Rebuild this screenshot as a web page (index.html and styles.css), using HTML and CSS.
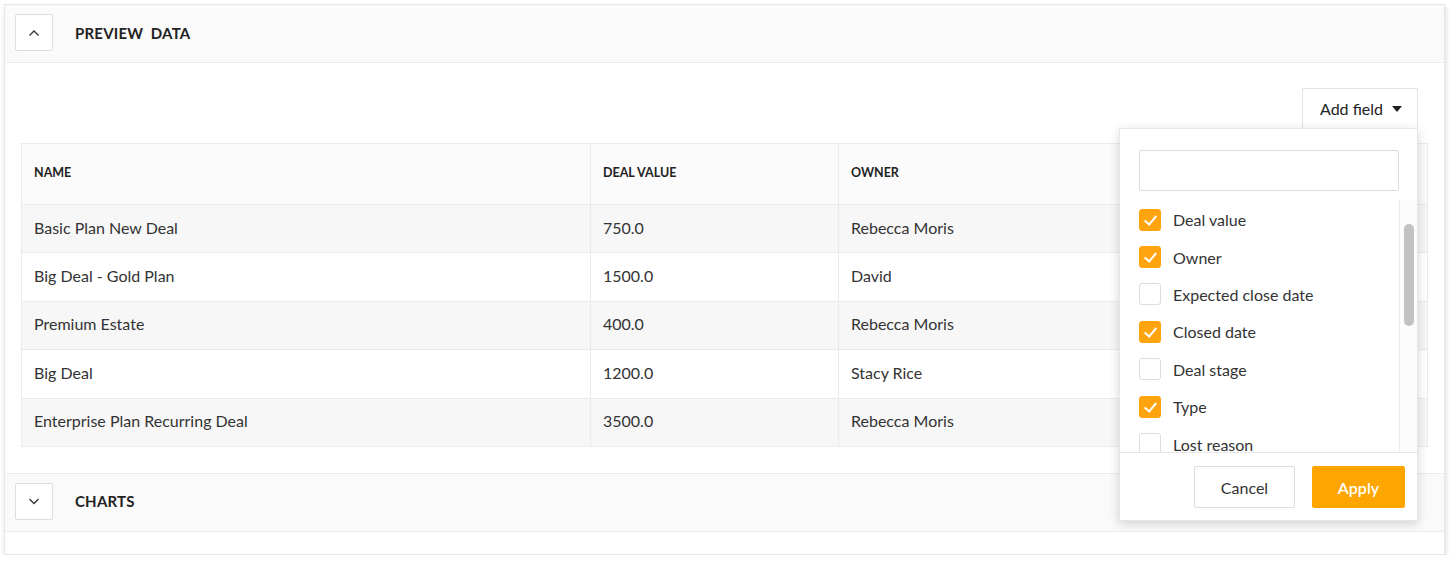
FILE: index.html
```html
<!DOCTYPE html>
<html lang="en">
<head>
  <meta charset="UTF-8">
  <meta name="viewport" content="width=device-width, initial-scale=1.0">
  <title>Report - Preview data</title>
  <link rel="stylesheet" href="styles.css">
</head>
<body>
  <div class="card">

    <!-- Preview data -->
    <section class="panel">
      <div class="panel-head">
        <button class="toggle">
          <svg width="14" height="14" viewBox="0 0 14 14"><path d="M2.5 9.5 L7 5 L11.5 9.5" fill="none" stroke="#333" stroke-width="1.3"/></svg>
        </button>
        <h2>PREVIEW&nbsp; DATA</h2>
      </div>

      <div class="panel-body">
        <div class="toolbar">
          <div class="field-picker">
            <button class="add-field">Add field <span class="caret"></span></button>

            <div class="dropdown">
              <input type="text" class="dropdown-search">
              <div class="dropdown-list">
                <ul class="options">
                  <li><span class="check on"></span>Deal value</li>
                  <li><span class="check on"></span>Owner</li>
                  <li><span class="check"></span>Expected close date</li>
                  <li><span class="check on"></span>Closed date</li>
                  <li><span class="check"></span>Deal stage</li>
                  <li><span class="check on"></span>Type</li>
                  <li><span class="check"></span>Lost reason</li>
                </ul>
                <div class="scroll-track"><div class="scroll-thumb"></div></div>
              </div>
              <div class="dropdown-foot">
                <button class="btn">Cancel</button>
                <button class="btn primary">Apply</button>
              </div>
            </div>
          </div>
        </div>

        <table class="data">
          <thead>
            <tr><th>NAME</th><th>DEAL VALUE</th><th>OWNER</th></tr>
          </thead>
          <tbody>
            <tr><td>Basic Plan New Deal</td><td>750.0</td><td>Rebecca Moris</td></tr>
            <tr><td>Big Deal - Gold Plan</td><td>1500.0</td><td>David</td></tr>
            <tr><td>Premium Estate</td><td>400.0</td><td>Rebecca Moris</td></tr>
            <tr><td>Big Deal</td><td>1200.0</td><td>Stacy Rice</td></tr>
            <tr><td>Enterprise Plan Recurring Deal</td><td>3500.0</td><td>Rebecca Moris</td></tr>
          </tbody>
        </table>
      </div>
    </section>

    <!-- Charts -->
    <section class="panel">
      <div class="panel-head">
        <button class="toggle">
          <svg width="14" height="14" viewBox="0 0 14 14"><path d="M2.5 5 L7 9.5 L11.5 5" fill="none" stroke="#333" stroke-width="1.3"/></svg>
        </button>
        <h2>CHARTS</h2>
      </div>
    </section>

    <div class="card-foot"></div>
  </div>
</body>
</html>
```
FILE: styles.css
```css
body {
  margin: 0;
  padding: 4px 9px 0 4px;
  font-family: Lato, "Noto Sans", sans-serif;
  color: #333;
  background-color: #fff;
}

.card {
  border: 1px solid #e6e6e6;
  box-shadow: 1px 3px 5px rgba(0, 0, 0, 0.14);
}

.panel-head {
  height: 57px;
  display: flex;
  align-items: center;
  padding-left: 10px;
  background-color: #fafafa;
  border-bottom: 1px solid #ececec;
}

.panel-head h2 {
  margin: 0 0 2px 22px;
  font-size: 15px;
  font-weight: 700;
  letter-spacing: 0.2px;
  color: #222;
}

.toggle {
  width: 38px;
  height: 37px;
  margin-bottom: 2px;
  padding: 0;
  display: flex;
  align-items: center;
  justify-content: center;
  background-color: #fff;
  border: 1px solid #dedede;
  border-radius: 2px;
}

.panel-body {
  padding: 25px 16px 26px 16px;
  background-color: #fff;
  border-bottom: 1px solid #ececec;
}

.toolbar {
  display: flex;
  justify-content: flex-end;
  padding-right: 10px;
  margin-bottom: 15px;
}

.field-picker {
  position: relative;
}

.add-field {
  height: 40px;
  width: 116px;
  padding: 0 0 0 2px;
  font-family: inherit;
  font-size: 16px;
  color: #222;
  background-color: #fff;
  border: 1px solid #e3e3e3;
  border-bottom: none;
  display: flex;
  align-items: center;
  justify-content: center;
  gap: 9px;
}

.caret {
  width: 0;
  height: 0;
  border-left: 5px solid transparent;
  border-right: 5px solid transparent;
  border-top: 6px solid #222;
  margin-top: 1px;
}

.dropdown {
  position: absolute;
  top: 40px;
  right: 0;
  width: 297px;
  background-color: #fff;
  border: 1px solid #e6e6e6;
  box-shadow: 0 3px 10px rgba(0, 0, 0, 0.16);
  z-index: 5;
}

.dropdown-search {
  display: block;
  box-sizing: border-box;
  width: 260px;
  height: 41px;
  margin: 21px 0 9px 19px;
  border: 1px solid #dcdcdc;
  border-radius: 2px;
}

.dropdown-list {
  display: flex;
  height: 252px;
  overflow: hidden;
  border-bottom: 1px solid #e6e6e6;
}

.options {
  flex: 1;
  list-style: none;
  margin: 0;
  padding: 1px 0 0 19px;
}

.options li {
  height: 37.4px;
  display: flex;
  align-items: center;
  font-size: 16px;
  color: #333;
}

.check {
  box-sizing: border-box;
  width: 22px;
  height: 22px;
  margin-right: 12px;
  border: 1px solid #dddddd;
  border-radius: 3px;
  background-color: #fff;
  position: relative;
}

.check.on {
  background-color: #ffa30f;
  border-color: #ffa30f;
}

.check.on::after {
  content: "";
  position: absolute;
  left: 7px;
  top: 3px;
  width: 5px;
  height: 10px;
  border-right: 2px solid #fff;
  border-bottom: 2px solid #fff;
  transform: rotate(40deg);
}

.scroll-track {
  width: 17px;
  border-left: 1px solid #ececec;
  background-color: #fcfcfc;
}

.scroll-thumb {
  width: 10px;
  height: 102px;
  margin: 24px 0 0 4px;
  border-radius: 5px;
  background-color: #c2c2c2;
}

.dropdown-foot {
  display: flex;
  justify-content: flex-end;
  gap: 17px;
  padding: 13px 12px 12px 0;
}

.btn {
  height: 42px;
  width: 101px;
  font-family: inherit;
  font-size: 16px;
  color: #333;
  background-color: #fff;
  border: 1px solid #dcdcdc;
  border-radius: 2px;
}

.btn.primary {
  width: 93px;
  color: #fff;
  background-color: #ffa500;
  border-color: #ffa500;
  font-weight: 600;
}

.data {
  width: 100%;
  border-collapse: collapse;
  font-size: 16px;
}

.data th,
.data td {
  box-sizing: border-box;
  text-align: left;
  padding: 0 12px 3px 12px;
  border: 1px solid #ebebeb;
  color: #333;
}

.data th {
  height: 61px;
  padding-bottom: 4px;
  font-size: 12.5px;
  font-weight: 700;
  color: #222;
  background-color: #fbfbfb;
}

.data th:nth-child(1) { width: 569px; }
.data th:nth-child(2) { width: 248px; }

.data td {
  height: 48.4px;
}

.data tbody tr:nth-child(odd) td {
  background-color: #f7f7f7;
}

.card-foot {
  height: 22px;
  background-color: #fff;
}
```
